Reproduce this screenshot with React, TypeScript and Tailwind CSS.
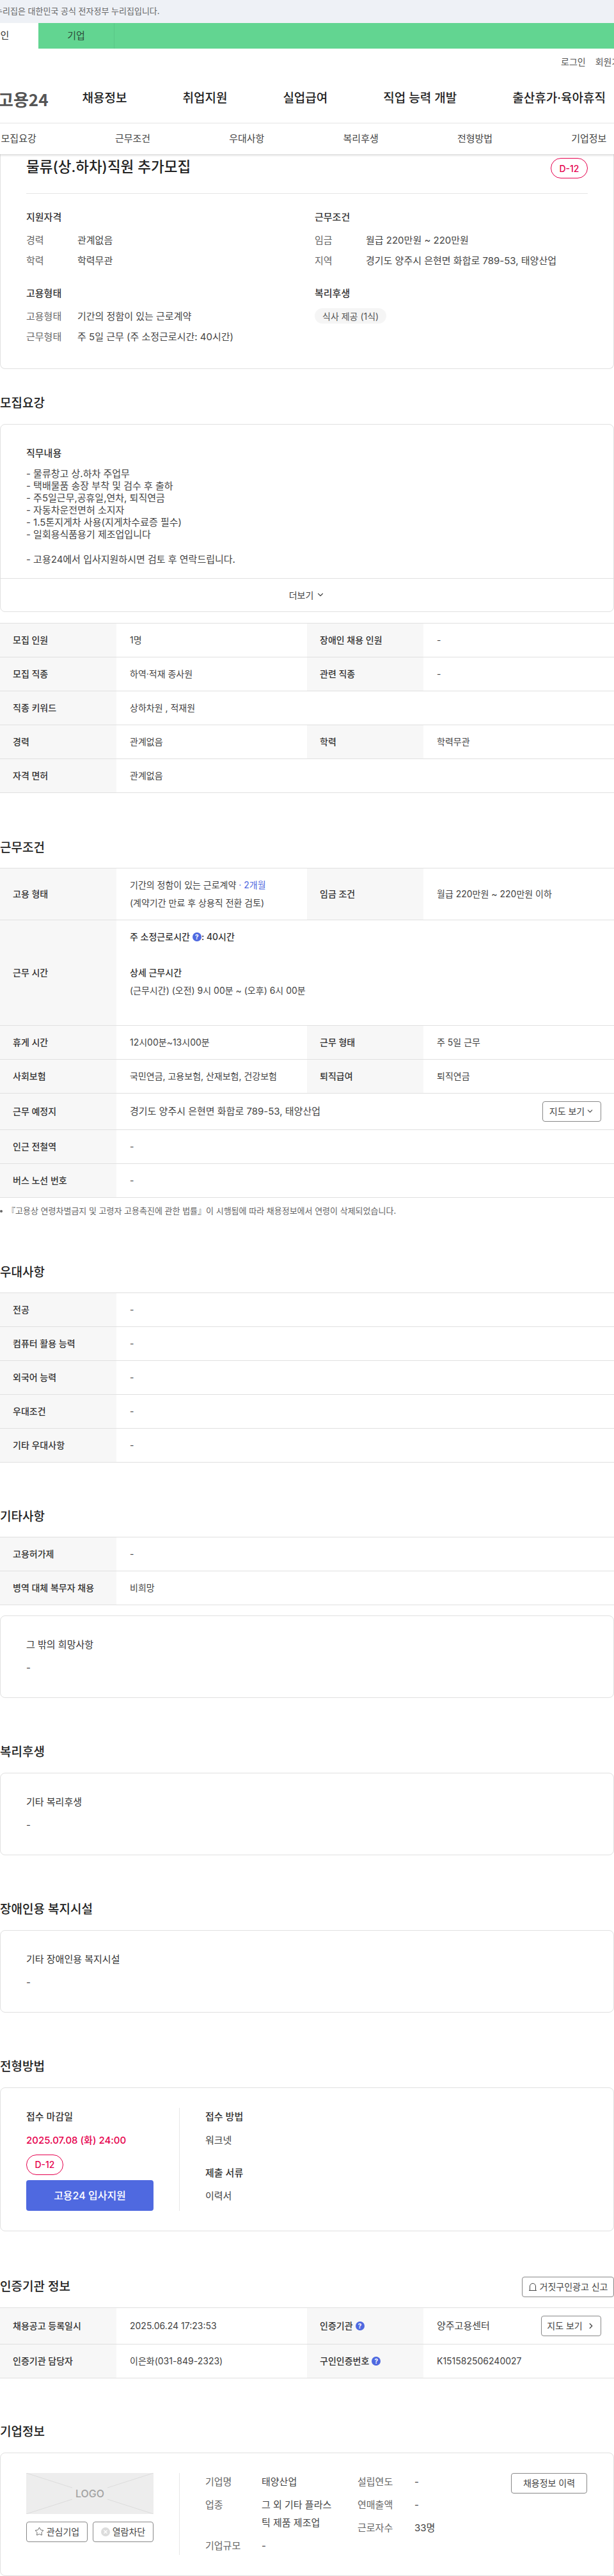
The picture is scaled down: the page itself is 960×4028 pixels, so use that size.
import React from "react";
import { ChevronDown, ChevronRight, Star } from "lucide-react";

const Help: React.FC = () => (
  <span className="inline-flex h-[14px] w-[14px] items-center justify-center rounded-full bg-[#4f69e0] text-[10px] font-bold leading-none text-white">
    ?
  </span>
);

const Badge: React.FC = () => (
  <span className="inline-flex h-8 w-[58px] items-center justify-center rounded-full border border-[#e6004d] text-[14px] font-medium text-[#e6004d]">
    D-12
  </span>
);

const Heading: React.FC<{ title: string; className?: string; children?: React.ReactNode }> = ({ title, className, children }) => (
  <div className={`flex h-8 items-center justify-between ${className ?? "mt-[70px] mb-[15px]"}`}>
    <h2 className="text-[19px] font-medium leading-8 text-[#222]">{title}</h2>
    {children}
  </div>
);

const Th: React.FC<{ children: React.ReactNode }> = ({ children }) => (
  <div className="flex items-center gap-1 bg-[#f7f7f7] pl-5 font-medium text-[#333]">{children}</div>
);

const Td: React.FC<{ children: React.ReactNode }> = ({ children }) => (
  <div className="flex min-w-0 flex-col justify-center py-3 pl-[21px] pr-5 leading-7 text-[#444]">{children}</div>
);

// two label/value pairs in one row
const Row2: React.FC<{ a: React.ReactNode; b: React.ReactNode; c: React.ReactNode; d: React.ReactNode }> = ({ a, b, c, d }) => (
  <div className="grid grid-cols-[182px_298px_182px_298px] border-b border-[#e0e0e0]">
    <Th>{a}</Th>
    <Td>{b}</Td>
    <Th>{c}</Th>
    <Td>{d}</Td>
  </div>
);

const Row1: React.FC<{ a: string; children: React.ReactNode }> = ({ a, children }) => (
  <div className="grid grid-cols-[182px_778px] border-b border-[#e0e0e0]">
    <Th>{a}</Th>
    <Td>{children}</Td>
  </div>
);

const Table: React.FC<{ children: React.ReactNode }> = ({ children }) => (
  <div className="border-t border-[#e0e0e0] text-[14px]">{children}</div>
);

const Card: React.FC<{ className?: string; children: React.ReactNode }> = ({ className, children }) => (
  <div className={`rounded-lg border border-[#e0e0e0] ${className ?? ""}`}>{children}</div>
);

const TextCard: React.FC<{ title: string }> = ({ title }) => (
  <Card className="h-[129px] px-10 pt-[31px] text-[15px] leading-7">
    <p className="text-[#333]">{title}</p>
    <p className="mt-2 text-[#444]">-</p>
  </Card>
);

const InfoLine: React.FC<{ label: string; value: string }> = ({ label, value }) => (
  <div className="flex leading-8">
    <span className="w-20 shrink-0 text-[#666]">{label}</span>
    <span className="text-[#444]">{value}</span>
  </div>
);

const OutlineButton: React.FC<{ className?: string; children: React.ReactNode }> = ({ className, children }) => (
  <button className={`flex h-8 items-center justify-center rounded border border-[#888] bg-white text-[14px] text-[#444] ${className ?? ""}`}>
    {children}
  </button>
);

const CompanyLine: React.FC<{ label: string; value: string; labelWidth: string; valueWidth?: string }> = ({ label, value, labelWidth, valueWidth }) => (
  <div className="flex">
    <span className={`shrink-0 text-[#666] ${labelWidth}`}>{label}</span>
    <span className={`text-[#444] ${valueWidth ?? ""}`}>{value}</span>
  </div>
);

const NAV = ["채용정보", "취업지원", "실업급여", "직업 능력 개발", "출산휴가·육아휴직"];
const SUBNAV = ["모집요강", "근무조건", "우대사항", "복리후생", "전형방법", "기업정보"];

export default function App() {
  return (
    <div className="w-[960px] overflow-hidden bg-white font-['Inter','Noto_Sans_CJK_KR',sans-serif] text-[#333]">
      {/* gov banner */}
      <div className="flex h-9 items-center whitespace-nowrap bg-[#eef1f6] text-[13px] text-[#666]">
        <span className="-ml-2">누리집은 대한민국 공식 전자정부 누리집입니다.</span>
      </div>

      {/* personal / company tabs */}
      <div className="flex h-10 bg-[#62d591] text-[15px]">
        <div className="-ml-[59px] flex w-[119px] items-center justify-center bg-white text-[#333]">개인</div>
        <div className="flex w-[119px] items-center justify-center border-r border-[#5ac887] text-[#2d4a39]">기업</div>
      </div>

      <div className="flex h-10 items-center gap-[15px] whitespace-nowrap pl-[877px] text-[14px] text-[#555]">
        <span>로그인</span>
        <span>회원가입</span>
      </div>

      <div className="flex h-[77px] items-center whitespace-nowrap border-b border-[#e6e6e6]">
        <span className="-ml-[3px] font-['Noto_Sans_CJK_KR',sans-serif] text-[26px] font-bold text-[#555]">고용24</span>
        <nav className="ml-[53px] flex gap-[87px] text-[19px] font-medium text-[#222]">
          {NAV.map((item) => (
            <span key={item}>{item}</span>
          ))}
        </nav>
      </div>

      <div className="relative z-10 h-12 shadow-[0_2px_3px_rgba(0,0,0,0.15)]">
        <div className="-ml-[60px] grid h-12 w-[1070px] grid-cols-6 items-center text-center text-[15px] text-[#444]">
          {SUBNAV.map((item) => (
            <span key={item}>{item}</span>
          ))}
        </div>
      </div>

      <Card className="h-[336px] rounded-t-none border-t-0 px-10">
        <div className="flex h-[62px] items-start justify-between border-b border-[#e6e6e6]">
          <h1 className="mt-[2px] text-[22.5px] font-medium leading-9 text-[#222]">물류(상.하차)직원 추가모집</h1>
          <div className="mt-[6px]">
            <Badge />
          </div>
        </div>
        <div className="grid grid-cols-[451px_1fr] pt-[23px] text-[15px]">
          <div>
            <h3 className="mb-[6px] font-medium leading-7 text-[#333]">지원자격</h3>
            <InfoLine label="경력" value="관계없음" />
            <InfoLine label="학력" value="학력무관" />
            <h3 className="mb-[6px] mt-[21px] font-medium leading-7 text-[#333]">고용형태</h3>
            <InfoLine label="고용형태" value="기간의 정함이 있는 근로계약" />
            <InfoLine label="근무형태" value="주 5일 근무 (주 소정근로시간: 40시간)" />
          </div>
          <div>
            <h3 className="mb-[6px] font-medium leading-7 text-[#333]">근무조건</h3>
            <InfoLine label="임금" value="월급 220만원 ~ 220만원" />
            <InfoLine label="지역" value="경기도 양주시 은현면 화합로 789-53, 태양산업" />
            <h3 className="mt-[21px] font-medium leading-7 text-[#333]">복리후생</h3>
            <span className="mt-[9px] inline-flex h-6 items-center rounded-full bg-[#f5f5f5] px-3 text-[14px] text-[#555]">식사 제공 (1식)</span>
          </div>
        </div>
      </Card>

      <Heading title="모집요강" className="mt-[38px] mb-[16px]" />
      <Card>
        <div className="px-10 pb-5 pt-[31px]">
          <h3 className="text-[15px] font-medium leading-7 text-[#333]">직무내용</h3>
          <p className="mt-2 whitespace-pre-line text-[15px] leading-[19.1px] text-[#444]">
            {"- 물류창고 상.하차 주업무\n- 택배물품 송장 부착 및 검수 후 출하\n- 주5일근무,공휴일,연차, 퇴직연금\n- 자동차운전면허 소지자\n- 1.5톤지게차 사용(지게차수료증 필수)\n- 일회용식품용기 제조업입니다\n\n- 고용24에서 입사지원하시면 검토 후 연락드립니다."}
          </p>
        </div>
        <div className="flex h-[52px] items-center justify-center gap-1 border-t border-[#e0e0e0] text-[14px] text-[#444]">
          더보기
          <ChevronDown size={14} strokeWidth={2} />
        </div>
      </Card>

      <div className="mt-[17px]">
        <Table>
          <Row2 a="모집 인원" b="1명" c="장애인 채용 인원" d="-" />
          <Row2 a="모집 직종" b="하역·적재 종사원" c="관련 직종" d="-" />
          <Row1 a="직종 키워드">상하차원 , 적재원</Row1>
          <Row2 a="경력" b="관계없음" c="학력" d="학력무관" />
          <Row1 a="자격 면허">관계없음</Row1>
        </Table>
      </div>

      <Heading title="근무조건" />
      <Table>
        <Row2
          a="고용 형태"
          b={
            <>
              <p>
                기간의 정함이 있는 근로계약 <span className="text-[#4f69e0]">· 2개월</span>
              </p>
              <p>(계약기간 만료 후 상용직 전환 검토)</p>
            </>
          }
          c="임금 조건"
          d="월급 220만원 ~ 220만원 이하"
        />
        <Row1 a="근무 시간">
          <p className="flex items-center gap-1 font-medium text-[#333]">
            주 소정근로시간 <Help />
            <span className="-ml-1">: 40시간</span>
          </p>
          <p className="mt-7 font-medium text-[#333]">상세 근무시간</p>
          <p>(근무시간) (오전) 9시 00분 ~ (오후) 6시 00분</p>
          <div className="h-7" />
        </Row1>
        <Row2 a="휴게 시간" b="12시00분~13시00분" c="근무 형태" d="주 5일 근무" />
        <Row2 a="사회보험" b="국민연금, 고용보험, 산재보험, 건강보험" c="퇴직급여" d="퇴직연금" />
        <div className="grid grid-cols-[182px_778px] border-b border-[#e0e0e0]">
          <Th>근무 예정지</Th>
          <div className="flex items-center justify-between py-3 pl-[21px] pr-5 text-[15px] text-[#444]">
            경기도 양주시 은현면 화합로 789-53, 태양산업
            <OutlineButton className="w-[92px] gap-[2px]">
              지도 보기
              <ChevronDown size={13} />
            </OutlineButton>
          </div>
        </div>
        <Row1 a="인근 전철역">-</Row1>
        <Row1 a="버스 노선 번호">-</Row1>
      </Table>
      <p className="mt-[11px] flex h-5 items-center gap-[7px] whitespace-nowrap text-[13px] text-[#666]">
        <span className="h-1 w-1 rounded-full bg-[#666]" />
        『고용상 연령차별금지 및 고령자 고용촉진에 관한 법률』이 시행됨에 따라 채용정보에서 연령이 삭제되었습니다.
      </p>

      <Heading title="우대사항" />
      <Table>
        <Row1 a="전공">-</Row1>
        <Row1 a="컴퓨터 활용 능력">-</Row1>
        <Row1 a="외국어 능력">-</Row1>
        <Row1 a="우대조건">-</Row1>
        <Row1 a="기타 우대사항">-</Row1>
      </Table>

      <Heading title="기타사항" className="mt-[69px] mb-[15px]" />
      <Table>
        <Row1 a="고용허가제">-</Row1>
        <Row1 a="병역 대체 복무자 채용">비희망</Row1>
      </Table>
      <div className="mt-4">
        <TextCard title="그 밖의 희망사항" />
      </div>

      <Heading title="복리후생" className="mt-[69px] mb-[16px]" />
      <TextCard title="기타 복리후생" />

      <Heading title="장애인용 복지시설" className="mt-[69px] mb-[16px]" />
      <TextCard title="기타 장애인용 복지시설" />

      <Heading title="전형방법" className="mt-[69px] mb-[16px]" />
      <Card className="flex px-10 pb-[31px] pt-[31px] text-[15px] leading-7">
        <div className="w-[199px]">
          <p className="font-medium text-[#333]">접수 마감일</p>
          <p className="mt-[9px] font-medium text-[#e6004d]">2025.07.08 (화) 24:00</p>
          <div className="mt-2 flex">
            <Badge />
          </div>
          <button className="mt-2 h-12 w-full rounded-sm bg-[#4f69e0] text-[16px] font-medium text-white">고용24 입사지원</button>
        </div>
        <div className="ml-10 border-l border-[#e6e6e6] pl-10">
          <p className="font-medium text-[#333]">접수 방법</p>
          <p className="mt-[9px] text-[#444]">워크넷</p>
          <p className="mt-[23px] font-medium text-[#333]">제출 서류</p>
          <p className="mt-2 text-[#444]">이력서</p>
        </div>
      </Card>

      <Heading title="인증기관 정보" className="mt-[71px] mb-[16px]">
        <OutlineButton className="w-[144px] gap-1">
          <svg width="14" height="14" viewBox="0 0 14 14" fill="none" stroke="#444" strokeWidth="1">
            <path d="M2.5 12.5V6a4.5 4.5 0 0 1 9 0v6.5M1 12.5h12" />
          </svg>
          거짓구인광고 신고
        </OutlineButton>
      </Heading>
      <Table>
        <div className="grid grid-cols-[182px_298px_182px_298px] border-b border-[#e0e0e0]">
          <Th>채용공고 등록일시</Th>
          <Td>2025.06.24 17:23:53</Td>
          <Th>
            인증기관 <Help />
          </Th>
          <div className="flex items-center justify-between py-3 pl-[21px] pr-5 text-[15px] text-[#444]">
            양주고용센터
            <OutlineButton className="w-[94px] gap-[6px]">
              지도 보기
              <ChevronRight size={14} strokeWidth={2.2} />
            </OutlineButton>
          </div>
        </div>
        <Row2
          a="인증기관 담당자"
          b="이은화(031-849-2323)"
          c={
            <>
              구인인증번호 <Help />
            </>
          }
          d="K151582506240027"
        />
      </Table>

      <Heading title="기업정보" className="mt-[68px] mb-[16px]" />
      <Card className="flex px-10 pb-8 pt-[31px] text-[15px] leading-7">
        <div className="w-[199px]">
          <div className="relative flex h-16 items-center justify-center bg-[#ededed]">
            <svg className="absolute inset-0" width="199" height="64" viewBox="0 0 199 64" stroke="#dcdcdc" strokeWidth="1">
              <path d="M0 0L72 23M199 0L127 23M0 64L72 41M199 64L127 41" />
            </svg>
            <span className="relative text-[16px] font-medium text-[#a3a3a3]">LOGO</span>
          </div>
          <div className="mt-3 flex justify-between">
            <OutlineButton className="w-[96px] gap-1">
              <Star size={15} strokeWidth={1.3} />
              관심기업
            </OutlineButton>
            <OutlineButton className="w-[95px] gap-1">
              <svg width="14" height="14" viewBox="0 0 14 14">
                <circle cx="7" cy="7" r="7" fill="#dcdcdc" />
                <path d="M4.5 4.5l5 5M9.5 4.5l-5 5" stroke="#fff" strokeWidth="1.3" />
              </svg>
              열람차단
            </OutlineButton>
          </div>
        </div>
        <div className="ml-10 flex border-l border-[#e6e6e6] pl-10">
          <div className="flex w-[238px] flex-col gap-2">
            <CompanyLine label="기업명" value="태양산업" labelWidth="w-[88px]" valueWidth="w-[120px]" />
            <CompanyLine label="업종" value="그 외 기타 플라스틱 제품 제조업" labelWidth="w-[88px]" valueWidth="w-[120px]" />
            <CompanyLine label="기업규모" value="-" labelWidth="w-[88px]" valueWidth="w-[120px]" />
          </div>
          <div className="flex w-[240px] flex-col gap-2">
            <CompanyLine label="설립연도" value="-" labelWidth="w-[89px]" />
            <CompanyLine label="연매출액" value="-" labelWidth="w-[89px]" />
            <CompanyLine label="근로자수" value="33명" labelWidth="w-[89px]" />
          </div>
          <OutlineButton className="w-[119px]">채용정보 이력</OutlineButton>
        </div>
      </Card>
    </div>
  );
}
